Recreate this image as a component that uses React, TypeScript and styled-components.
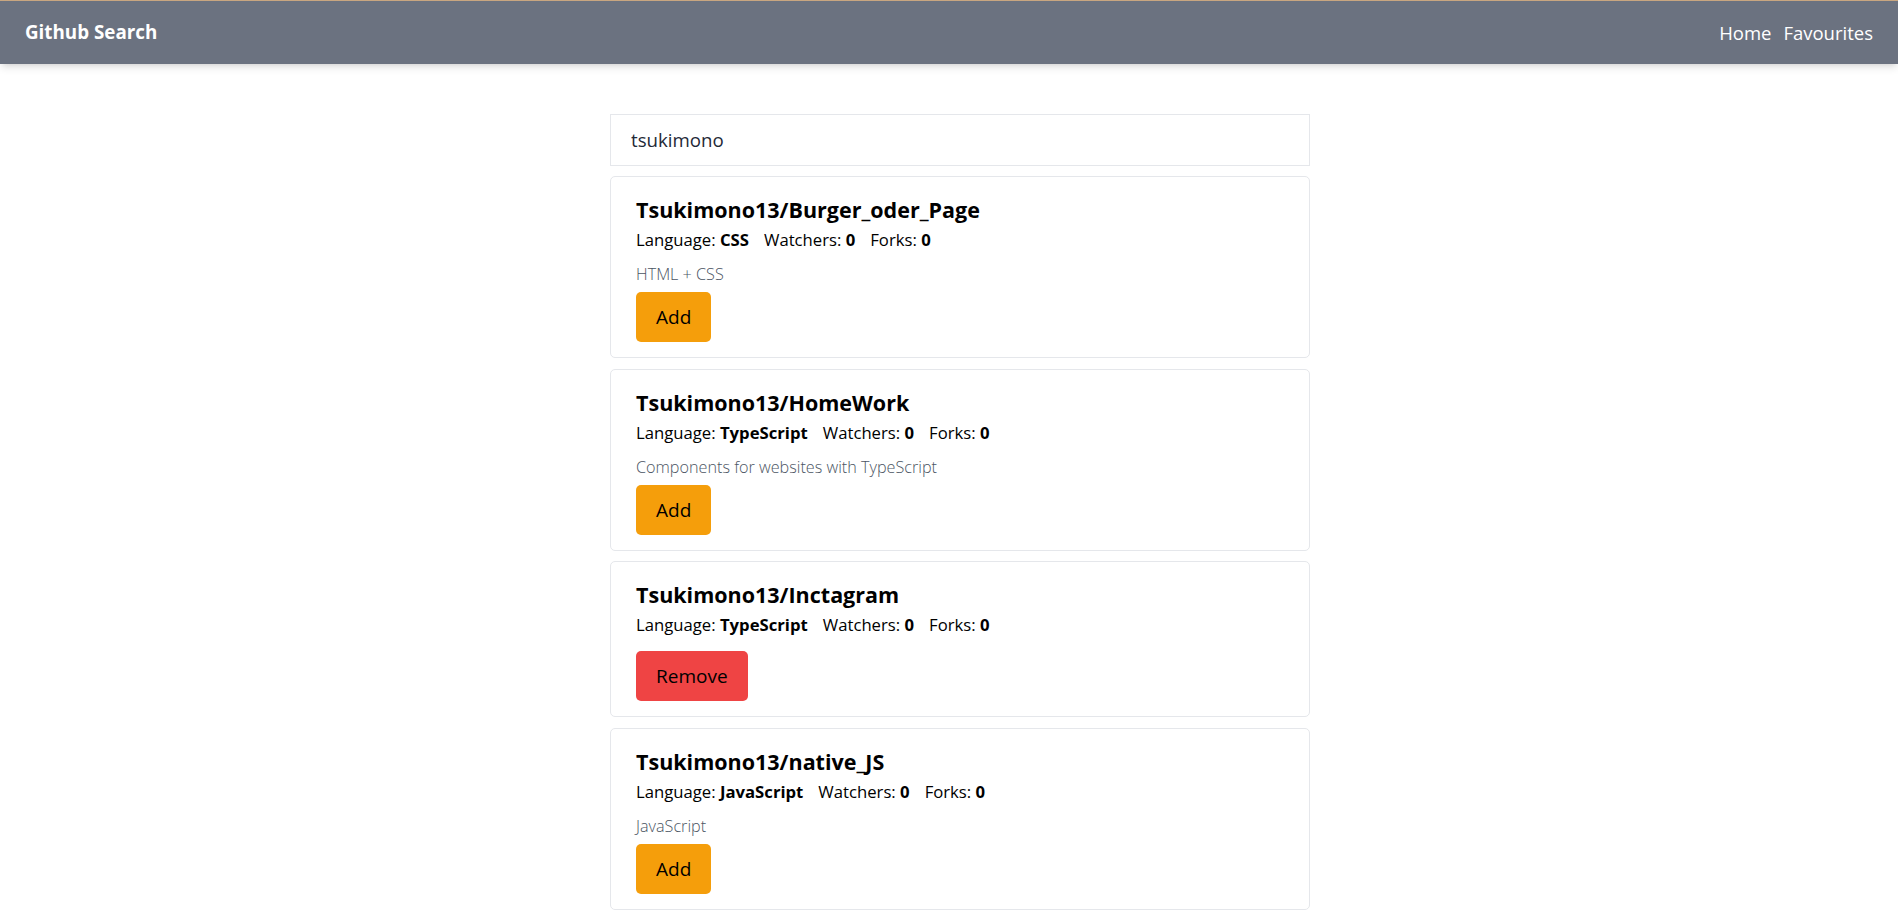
import React from "react";
import styled, { createGlobalStyle } from "styled-components";

const GlobalStyle = createGlobalStyle`
  html, body {
    margin: 0;
    padding: 0;
    overflow: hidden;
    background: #ffffff;
    font-family: "Open Sans", "Noto Sans", Arial, sans-serif;
    color: #000;
  }
  * { box-sizing: border-box; }
`;

const Nav = styled.nav`
  display: flex;
  justify-content: space-between;
  align-items: center;
  height: 63.5px;
  padding: 0 25px;
  border-top: 1px solid #c9a680;
  background: #6b7280;
  color: #ffffff;
  box-shadow: 0 5px 7.5px -1.25px rgba(0, 0, 0, 0.1),
    0 2.5px 5px -2.5px rgba(0, 0, 0, 0.1);
`;

const Brand = styled.h3`
  margin: 0;
  font-size: 18.8px;
  font-weight: 700;
`;

const NavLinks = styled.div`
  display: flex;
  gap: 12px;
`;

const NavLink = styled.a`
  color: #ffffff;
  text-decoration: none;
  font-size: 18.5px;
`;

const Main = styled.main`
  display: flex;
  justify-content: center;
  padding: 50px 0 0 22px;
`;

const Column = styled.div`
  width: 700px;
`;

const SearchInput = styled.input`
  display: block;
  width: 100%;
  height: 52.5px;
  margin: 0 0 10px;
  padding: 0 20px;
  border: 1px solid #e5e7eb;
  border-radius: 0;
  outline: none;
  font-family: inherit;
  font-size: 18.7px;
  color: #1f2937;
`;

const List = styled.ul`
  display: flex;
  flex-direction: column;
  gap: 10.5px;
  margin: 0;
  padding: 0;
  list-style: none;
`;

const Card = styled.li`
  display: flex;
  flex-direction: column;
  align-items: flex-start;
  padding: 15px 25px;
  border: 1px solid #e5e7eb;
  border-radius: 5px;
`;

const Title = styled.h2`
  margin: 0;
  font-size: 21.5px;
  line-height: 35px;
  font-weight: 700;
`;

const Meta = styled.p`
  margin: 0 0 10px;
  font-size: 16.7px;
  line-height: 25px;
`;

const MetaItem = styled.span`
  margin-right: 15px;
`;

const Strong = styled.b`
  font-weight: 700;
`;

const Description = styled.p`
  margin: 0 0 1px;
  font-size: 16.2px;
  line-height: 25px;
  font-weight: 300;
  color: #4b5563;
`;

const ActionButton = styled.button<{ $variant: "add" | "remove" }>`
  margin-top: 4px;
  height: 50px;
  padding: 0 20px;
  border: none;
  border-radius: 5px;
  background: ${(p) => (p.$variant === "add" ? "#f59e0b" : "#ef4444")};
  color: #000;
  font-family: inherit;
  font-size: 19px;
  cursor: pointer;
`;

type Repo = {
  name: string;
  language: string;
  watchers: number;
  forks: number;
  description?: string;
  favourite: boolean;
};

const repos: Repo[] = [
  { name: "Tsukimono13/Burger_oder_Page", language: "CSS", watchers: 0, forks: 0, description: "HTML + CSS", favourite: false },
  { name: "Tsukimono13/HomeWork", language: "TypeScript", watchers: 0, forks: 0, description: "Components for websites with TypeScript", favourite: false },
  { name: "Tsukimono13/Inctagram", language: "TypeScript", watchers: 0, forks: 0, favourite: true },
  { name: "Tsukimono13/native_JS", language: "JavaScript", watchers: 0, forks: 0, description: "JavaScript", favourite: false },
];

export default function App() {
  return (
    <>
      <GlobalStyle />
      <Nav>
        <Brand>Github Search</Brand>
        <NavLinks>
          <NavLink href="#">Home</NavLink>
          <NavLink href="#">Favourites</NavLink>
        </NavLinks>
      </Nav>
      <Main>
        <Column>
          <SearchInput defaultValue="tsukimono" placeholder="Search for Github username..." />
          <List>
            {repos.map((r) => (
              <Card key={r.name}>
                <Title>{r.name}</Title>
                <Meta>
                  <MetaItem>
                    Language: <Strong>{r.language}</Strong>
                  </MetaItem>
                  <MetaItem>
                    Watchers: <Strong>{r.watchers}</Strong>
                  </MetaItem>
                  <MetaItem>
                    Forks: <Strong>{r.forks}</Strong>
                  </MetaItem>
                </Meta>
                {r.description && <Description>{r.description}</Description>}
                <ActionButton $variant={r.favourite ? "remove" : "add"}>
                  {r.favourite ? "Remove" : "Add"}
                </ActionButton>
              </Card>
            ))}
          </List>
        </Column>
      </Main>
    </>
  );
}
